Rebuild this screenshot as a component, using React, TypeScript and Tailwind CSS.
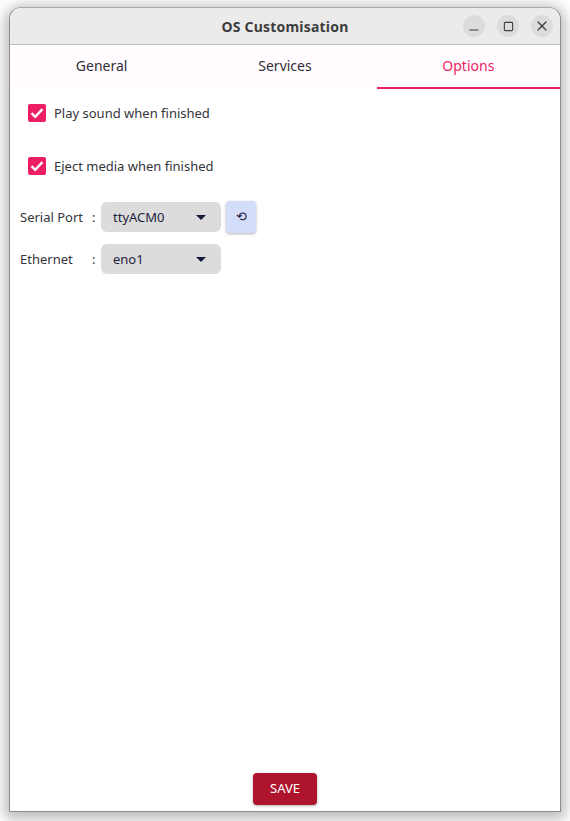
import React from 'react';
import { Minus, Square, X } from 'lucide-react';

const font = "font-['Noto_Sans','Open_Sans',sans-serif]";

const CheckRow = ({ label, className }: { label: string; className: string }) => (
  <div className={`flex items-center ${className}`}>
    <div className="w-[18px] h-[18px] rounded-[2px] bg-[#ee1e62] flex items-center justify-center">
      <svg width="14" height="14" viewBox="0 0 14 14" fill="none">
        <path d="M1.5 7.2 L5.2 10.8 L12.5 3.2" stroke="white" strokeWidth="2.4" />
      </svg>
    </div>
    <span className="ml-[8px] text-[13px] leading-[20px] text-[#33343a]">{label}</span>
  </div>
);

const Select = ({ value }: { value: string }) => (
  <div className="w-[120px] h-[30px] rounded-[6px] bg-[#dcdcdc] flex items-center justify-between pl-[12px] pr-[15px]">
    <span className="pt-[1px] text-[13px] text-[#1e2140]">{value}</span>
    <svg width="10" height="5" viewBox="0 0 10 5"><path d="M0 0 H10 L5 5 Z" fill="#141a3c" /></svg>
  </div>
);

const FieldRow = ({ label, children }: { label: string; children: React.ReactNode }) => (
  <div className="flex items-center h-[30px]">
    <span className="w-[72px] pt-[1px] text-[13px] text-[#33343a] whitespace-nowrap">{label}</span>
    <span className="w-[9px] pt-[1px] text-[13px] text-[#33343a]">:</span>
    {children}
  </div>
);

const WinButton = ({ children }: { children: React.ReactNode }) => (
  <div className="w-[22px] h-[22px] rounded-full bg-[#dcdcdc] flex items-center justify-center text-[#3d3d3d]">
    {children}
  </div>
);

export default function App() {
  return (
    <div className={`w-[570px] h-[821px] overflow-hidden bg-white pt-[7px] pl-[9px] ${font}`}>
      <div className="w-[552px] h-[805px] rounded-t-[12px] bg-white flex flex-col border-x border-b border-[#8e8e8e] border-t border-t-[#a8a8a8] shadow-[0_3px_14px_4px_rgba(0,0,0,0.28)]">
        <div className="h-[37px] shrink-0 relative flex items-center justify-center bg-[#ebebeb] border-b border-[#bdbdbd] rounded-t-[12px]">
          <span className="text-[14px] font-bold tracking-[0.2px] text-[#3d3d3d]">OS Customisation</span>
          <div className="absolute right-[7px] top-[7px] flex gap-[12px]">
            <WinButton><Minus size={14} strokeWidth={2} className="mt-[7px]" /></WinButton>
            <WinButton><Square size={11} strokeWidth={2.4} /></WinButton>
            <WinButton><X size={16} strokeWidth={1.9} /></WinButton>
          </div>
        </div>
        <div className="h-[44px] shrink-0 grid grid-cols-3 bg-[#fffbff] text-[14px]">
          <div className="flex items-center justify-center pb-[3px] text-[#2f3036]">General</div>
          <div className="flex items-center justify-center pb-[3px] text-[#2f3036]">Services</div>
          <div className="flex items-center justify-center pb-[1px] text-[#ee1e62] border-b-2 border-[#ee1e62]">Options</div>
        </div>
        <div className="flex-1 flex flex-col pl-[10px] pt-[14px]">
          <CheckRow label="Play sound when finished" className="ml-[8px]" />
          <CheckRow label="Eject media when finished" className="ml-[8px] mt-[33px]" />
          <div className="mt-[26px] flex flex-col gap-[12px]">
            <FieldRow label="Serial Port">
              <Select value="ttyACM0" />
              <div className="ml-[5px] w-[30px] h-[32px] rounded-[4px] bg-[#d3dcf8] shadow-[0_1px_3px_rgba(0,0,0,0.3)] flex items-center justify-center text-[13px] text-[#1e2140]">⟲</div>
            </FieldRow>
            <FieldRow label="Ethernet">
              <Select value="eno1" />
            </FieldRow>
          </div>
          <div className="mt-auto mb-[6px] -ml-[10px] flex justify-center">
            <div className="w-[64px] h-[32px] rounded-[4px] bg-[#ae152d] text-white text-[13px] flex items-center justify-center shadow-[0_1px_3px_rgba(0,0,0,0.3)]">SAVE</div>
          </div>
        </div>
      </div>
    </div>
  );
}
